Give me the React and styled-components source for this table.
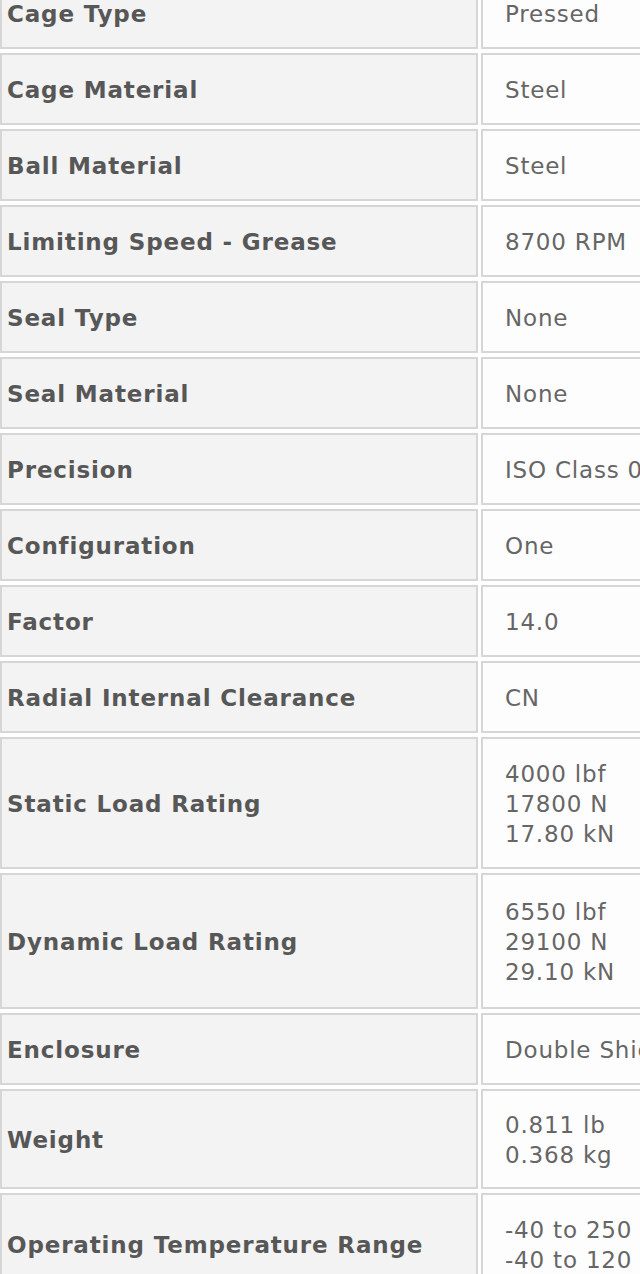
import React from "react";
import styled, { createGlobalStyle } from "styled-components";

const specs = [
  { label: "Cage Type", values: ["Pressed"] },
  { label: "Cage Material", values: ["Steel"] },
  { label: "Ball Material", values: ["Steel"] },
  { label: "Limiting Speed - Grease", values: ["8700 RPM"] },
  { label: "Seal Type", values: ["None"] },
  { label: "Seal Material", values: ["None"] },
  { label: "Precision", values: ["ISO Class 0"] },
  { label: "Configuration", values: ["One"] },
  { label: "Factor", values: ["14.0"] },
  { label: "Radial Internal Clearance", values: ["CN"] },
  { label: "Static Load Rating", values: ["4000 lbf", "17800 N", "17.80 kN"] },
  { label: "Dynamic Load Rating", values: ["6550 lbf", "29100 N", "29.10 kN"], pad: 21 },
  { label: "Enclosure", values: ["Double Shield"] },
  { label: "Weight", values: ["0.811 lb", "0.368 kg"], pad: 18 },
  { label: "Operating Temperature Range", values: ["-40 to 250 °F", "-40 to 120 °C"] },
];

const GlobalStyle = createGlobalStyle`
  html, body {
    margin: 0;
    padding: 0;
    background: #ffffff;
    overflow: hidden;
  }
`;

const Page = styled.div`
  width: 640px;
  height: 1274px;
  overflow: hidden;
`;

const SpecTable = styled.div`
  display: grid;
  grid-template-columns: 478px 420px;
  column-gap: 3px;
  row-gap: 4px;
  margin-top: -23px;
  font-family: "DejaVu Sans", Verdana, sans-serif;
  font-size: 23px;
  line-height: 30px;
`;

const Cell = styled.div`
  display: flex;
  flex-direction: column;
  justify-content: center;
  border: 2px solid #d6d6d6;
  padding-top: ${(p) => (p.$pad ?? 19) + 1}px;
  padding-bottom: ${(p) => (p.$pad ?? 19) - 1}px;
`;

const LabelCell = styled(Cell)`
  background: #f3f3f3;
  padding-left: 5px;
  color: #575757;
  font-weight: bold;
  letter-spacing: 0.85px;
  white-space: nowrap;
`;

const ValueCell = styled(Cell)`
  background: #fdfdfd;
  padding-left: 22px;
  color: #666666;
  letter-spacing: 0.8px;
  white-space: nowrap;
`;

const ValueLine = styled.span`
  display: block;
`;

export default function App() {
  return (
    <Page>
      <GlobalStyle />
      <SpecTable>
        {specs.map((row) => (
          <React.Fragment key={row.label}>
            <LabelCell $pad={row.pad}>{row.label}</LabelCell>
            <ValueCell $pad={row.pad}>
              {row.values.map((v) => (
                <ValueLine key={v}>{v}</ValueLine>
              ))}
            </ValueCell>
          </React.Fragment>
        ))}
      </SpecTable>
    </Page>
  );
}
